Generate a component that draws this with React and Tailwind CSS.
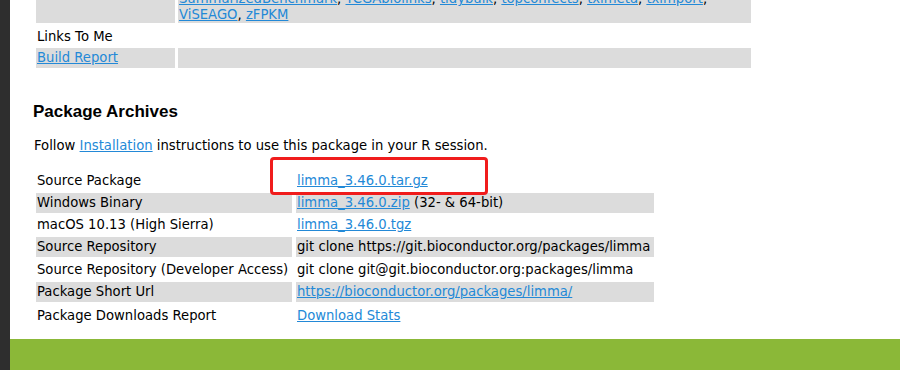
import React from "react";

const link = "text-[#2389d7] underline";

const rows = [
  { label: "Source Package", value: <a className={link}>limma_3.46.0.tar.gz</a>, h: "h-[24px]" },
  {
    label: "Windows Binary",
    value: (
      <span>
        <a className={link}>limma_3.46.0.zip</a> (32- &amp; 64-bit)
      </span>
    ),
    h: "h-[20px]",
  },
  { label: "macOS 10.13 (High Sierra)", value: <a className={link}>limma_3.46.0.tgz</a>, h: "h-[24px]" },
  { label: "Source Repository", value: "git clone https://git.bioconductor.org/packages/limma", h: "h-[20px]" },
  { label: "Source Repository (Developer Access)", value: "git clone git@git.bioconductor.org:packages/limma", h: "h-[25px]" },
  { label: "Package Short Url", value: <a className={link}>https://bioconductor.org/packages/limma/</a>, h: "h-[20px]" },
  { label: "Package Downloads Report", value: <a className={link}>Download Stats</a>, h: "h-[28px]" },
];

const App = () => {
  return (
    <div
      className="flex h-[370px] w-[900px] overflow-hidden bg-white text-[13.2px] text-black"
      style={{ fontFamily: '"DejaVu Sans", Verdana, sans-serif' }}
    >
      <div className="w-[10px] shrink-0 bg-[#2e2e2e]" />
      <div className="flex flex-1 flex-col">
        <div className="flex h-[339px] flex-col pl-[23px]">
          {/* dependency table (scrolled) */}
          <div className="ml-[3px] flex flex-col">
            <div className="flex h-[23px] gap-[3px]">
              <div className="w-[139px] bg-[#dcdcdc]" />
              <div className="w-[573px] overflow-hidden bg-[#dcdcdc] pl-[1px] leading-[16px]">
                <div className="-mt-[9px] whitespace-nowrap">
                  <a className={link}>SummarizedBenchmark</a>, <a className={link}>TCGAbiolinks</a>,{" "}
                  <a className={link}>tidybulk</a>, <a className={link}>topconfects</a>,{" "}
                  <a className={link}>tximeta</a>, <a className={link}>tximport</a>,
                </div>
                <div className="whitespace-nowrap">
                  <a className={link}>ViSEAGO</a>, <a className={link}>zFPKM</a>
                </div>
              </div>
            </div>
            <div className="flex h-[25px] items-center pl-[1px] pt-[2px]">Links To Me</div>
            <div className="flex h-[20px] gap-[3px]">
              <div className="flex w-[139px] items-center bg-[#dcdcdc] pl-[1px]">
                <a className={link}>Build Report</a>
              </div>
              <div className="w-[573px] bg-[#dcdcdc]" />
            </div>
          </div>

          <h2
            className="mt-[34px] text-[17px] font-bold leading-[20px]"
            style={{ fontFamily: '"Liberation Sans", Arial, sans-serif' }}
          >
            Package Archives
          </h2>

          <p className="mt-[16px] pl-[1px] leading-[16px]">
            Follow <a className={link}>Installation</a> instructions to use this package in your R session.
          </p>

          <div className="relative ml-[3px] mt-[15px] flex flex-col">
            {rows.map((r, i) => {
              const gray = i % 2 === 1;
              return (
                <div key={r.label} className={`flex gap-[4px] ${r.h}`}>
                  <div className={`flex w-[256px] items-center whitespace-nowrap pl-[1px] ${gray ? "bg-[#dcdcdc]" : ""}`}>
                    {r.label}
                  </div>
                  <div className={`flex w-[358px] items-center whitespace-nowrap pl-[1px] ${gray ? "bg-[#dcdcdc]" : ""}`}>
                    {r.value}
                  </div>
                </div>
              );
            })}
            <div className="absolute left-[234px] top-[-12px] h-[38px] w-[218px] rounded-[4px] border-[3px] border-[#f01c1c]" />
          </div>
        </div>
        <div className="flex-1 bg-[#8bb838]" />
      </div>
    </div>
  );
};

export default App;
